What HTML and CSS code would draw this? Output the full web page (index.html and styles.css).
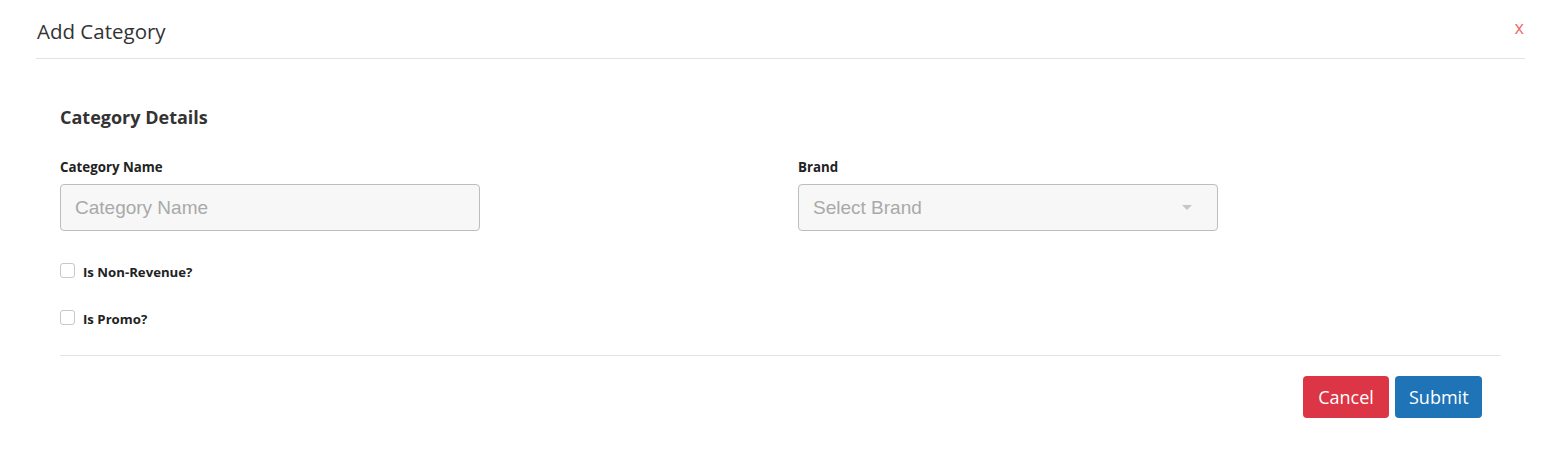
FILE: index.html
```html
<!DOCTYPE html>
<html>
<head>
<meta charset="utf-8">
<link rel="stylesheet" href="styles.css">
</head>
<body>
<div class="modal">
  <div class="modal-header">
    <h1 class="modal-title">Add Category</h1>
    <span class="close">x</span>
  </div>
  <div class="modal-body">
    <h2 class="section-title">Category Details</h2>
    <div class="grid">
      <div class="field">
        <label class="label">Category Name</label>
        <input class="control" type="text" placeholder="Category Name">
      </div>
      <div class="field">
        <label class="label">Brand</label>
        <div class="control select">
          <span class="placeholder">Select Brand</span>
          <span class="caret"></span>
        </div>
      </div>
    </div>
    <div class="check"><span class="box"></span><span class="check-label">Is Non-Revenue?</span></div>
    <div class="check"><span class="box"></span><span class="check-label">Is Promo?</span></div>
    <div class="footer">
      <button class="btn btn-cancel">Cancel</button>
      <button class="btn btn-submit">Submit</button>
    </div>
  </div>
</div>
</body>
</html>
```
FILE: styles.css
```css
html, body {
  margin: 0;
  padding: 0;
  background: #ffffff;
}
body {
  font-family: "Open Sans", "Noto Sans", sans-serif;
  color: #333;
}
.modal {
  width: 1560px;
  height: 460px;
  box-sizing: border-box;
}
.modal-header {
  margin: 0 35px 0 36px;
  height: 59px;
  border-bottom: 1px solid #e3e3e3;
  display: flex;
  justify-content: space-between;
  align-items: flex-start;
  box-sizing: border-box;
}
.modal-title {
  margin: 0 0 0 1px;
  padding-top: 17px;
  font-size: 20.5px;
  font-weight: 400;
  line-height: 28px;
  color: #333;
}
.close {
  padding-top: 17px;
  color: #f26d6d;
  font-size: 18px;
  line-height: 20px;
  margin-right: 1px;
}
.modal-body {
  padding: 0 59px 0 60px;
}
.section-title {
  margin: 0;
  padding-top: 46px;
  font-family: "Open Sans", sans-serif;
  font-weight: 700;
  font-size: 18px;
  line-height: 24px;
  color: #333;
}
.grid {
  display: grid;
  grid-template-columns: 738px 1fr;
  margin-top: 30px;
}
.field {
  display: flex;
  flex-direction: column;
}
.label {
  font-family: "Open Sans", sans-serif;
  font-weight: 700;
  font-size: 13.3px;
  line-height: 16px;
  color: #222;
  margin-bottom: 9px;
}
.control {
  width: 420px;
  height: 47px;
  box-sizing: border-box;
  border: 1px solid #bdbdbd;
  border-radius: 4px;
  background: #f7f7f7;
  padding: 0 14px;
  font-family: "Liberation Sans", Arial, sans-serif;
  font-size: 19px;
  color: #333;
  outline: none;
}
.control::placeholder {
  color: #a9a9a9;
}
.select {
  display: flex;
  align-items: center;
  justify-content: space-between;
}
.placeholder {
  color: #a9a9a9;
}
.caret {
  width: 0;
  height: 0;
  border-left: 5px solid transparent;
  border-right: 5px solid transparent;
  border-top: 5px solid #c6c6c6;
  margin-right: 11px;
}
.check {
  display: flex;
  align-items: center;
  height: 17px;
  margin-top: 31px;
}
.check + .check {
  margin-top: 30px;
}
.box {
  width: 13px;
  height: 13px;
  border: 1px solid #c8c8c8;
  border-radius: 3px;
  background: #fff;
  box-sizing: content-box;
}
.check-label {
  margin-left: 8px;
  font-family: "Open Sans", sans-serif;
  font-weight: 700;
  font-size: 13.2px;
  color: #222;
  margin-top: 2px;
}
.footer {
  margin-top: 29px;
  border-top: 1px solid #e4e4e4;
  padding-top: 20px;
  display: flex;
  justify-content: flex-end;
  gap: 6px;
  padding-right: 19px;
}
.btn {
  height: 42px;
  border: none;
  border-radius: 4px;
  color: #fff;
  font-family: "Open Sans", "Noto Sans", sans-serif;
  font-size: 18px;
  padding: 0 14px;
  cursor: pointer;
}
.btn-cancel {
  background: #dc3545;
  width: 86px;
}
.btn-submit {
  background: #1f73b7;
  width: 87px;
}
```
